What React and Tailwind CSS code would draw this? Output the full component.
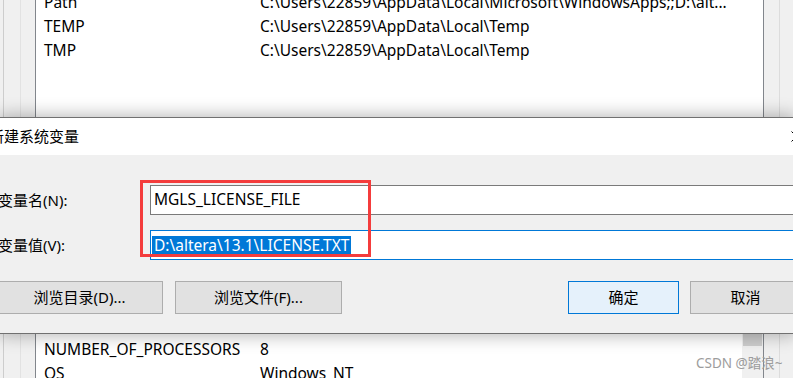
import React from "react";

const FONT = "font-['Noto_Sans','Noto_Sans_CJK_SC',sans-serif]";

const userVars = [
  { name: "Path", value: "C:\\Users\\22859\\AppData\\Local\\Microsoft\\WindowsApps;;D:\\alt..." },
  { name: "TEMP", value: "C:\\Users\\22859\\AppData\\Local\\Temp" },
  { name: "TMP", value: "C:\\Users\\22859\\AppData\\Local\\Temp" },
];

const sysVars = [
  { name: "NUMBER_OF_PROCESSORS", value: "8" },
  { name: "OS", value: "Windows_NT" },
];

const VarRow = ({ name, value }) => (
  <div className="flex items-center h-[24px] text-[15.5px] text-black whitespace-nowrap">
    <span className="w-[224px] pl-[8px] shrink-0">{name}</span>
    <span>{value}</span>
  </div>
);

const LeftStrip = () => (
  <div className="w-[36px] shrink-0 flex bg-[#f0f0f0] border-r border-[#82868c]">
    <div className="w-[4px] border-r border-[#cdcdcd]" />
    <div className="w-[17px] border-r border-[#e2e2e2]" />
  </div>
);

const RightStrip = () => (
  <div className="w-[30px] shrink-0 flex bg-[#f0f0f0] border-l border-[#82868c]">
    <div className="w-[16px] border-r border-[#dcdcdc]" />
  </div>
);

const WinButton = ({ children, primary, className = "" }) => (
  <div
    className={`h-[33px] w-[167px] shrink-0 flex items-center justify-center text-[15px] text-black border ${
      primary ? "bg-[#e5f1fb] border-[#0078d7]" : "bg-[#e1e1e1] border-[#adadad]"
    } ${className}`}
  >
    {children}
  </div>
);

export default function App() {
  return (
    <div className={`relative w-[793px] h-[378px] overflow-hidden flex flex-col bg-[#f0f0f0] ${FONT}`}>
      {/* user variables list behind the dialog */}
      <div className="flex h-[117px] shrink-0">
        <LeftStrip />
        <div className="flex-1 bg-white overflow-hidden">
          <div className="-mt-[9px]">
            {userVars.map((v) => (
              <VarRow key={v.name} {...v} />
            ))}
          </div>
        </div>
        <RightStrip />
      </div>

      {/* dialog */}
      <div className="relative z-10 shrink-0 border-y border-[#707070] shadow-[0_0_16px_2px_rgba(0,0,0,0.28)]">
        <div className="h-[37px] bg-white flex items-center">
          <span className="-ml-[11px] text-[15px] text-black whitespace-nowrap">新建系统变量</span>
          <svg className="ml-auto -mr-[9px] shrink-0" width="11" height="11" viewBox="0 0 11 11">
            <path d="M0.5 0.5 L10.5 10.5 M10.5 0.5 L0.5 10.5" stroke="#000" strokeWidth="1" />
          </svg>
        </div>
        <div className="relative h-[178px] bg-[#f0f0f0] pt-[30px]">
          <div className="flex items-center h-[30px]">
            <span className="-ml-[2px] w-[152px] shrink-0 text-[15px] text-black whitespace-nowrap">变量名(N):</span>
            <div className="w-[700px] shrink-0 h-[30px] bg-white border border-[#7a7a7a] flex items-center pl-[3px] text-[15.5px] text-black">
              MGLS_LICENSE_FILE
            </div>
          </div>
          <div className="flex items-center h-[30px] mt-[15px]">
            <span className="-ml-[2px] w-[152px] shrink-0 text-[15px] text-black whitespace-nowrap">变量值(V):</span>
            <div className="w-[700px] shrink-0 h-[30px] bg-white border border-[#0078d7] flex items-center pl-[1px] text-[15.5px]">
              <span className="inline-block h-[19px] leading-[19px] px-[2px] bg-[#0078d7] text-white whitespace-nowrap">
                D:\altera\13.1\LICENSE.TXT
              </span>
            </div>
          </div>
          <div className="flex mt-[21px]">
            <WinButton className="-ml-[4px]">浏览目录(D)...</WinButton>
            <WinButton className="ml-[12px]">浏览文件(F)...</WinButton>
            <WinButton primary className="ml-[226px] !w-[111px]">确定</WinButton>
            <WinButton className="ml-[11px] !w-[111px]">取消</WinButton>
          </div>

          {/* red annotation box */}
          <div className="absolute left-[140px] top-[25px] w-[231px] h-[77px] border-[3px] border-[#f43c3c]" />
        </div>
      </div>

      {/* system variables list behind the dialog */}
      <div className="flex flex-1">
        <LeftStrip />
        <div className="flex-1 flex bg-white overflow-hidden">
          <div className="flex-1 pt-[4px]">
            {sysVars.map((v) => (
              <VarRow key={v.name} {...v} />
            ))}
          </div>
          <div className="w-[21px] shrink-0 bg-[#f0f0f0]">
            <div className="h-[12px] bg-[#cdcdcd] mx-[1px]" />
          </div>
        </div>
        <RightStrip />
      </div>

      <div className="absolute left-[696px] top-[354px] text-[13.5px] leading-[18px] text-[#9c9c9c] whitespace-nowrap z-20">
        CSDN @踏浪~
      </div>
    </div>
  );
}
